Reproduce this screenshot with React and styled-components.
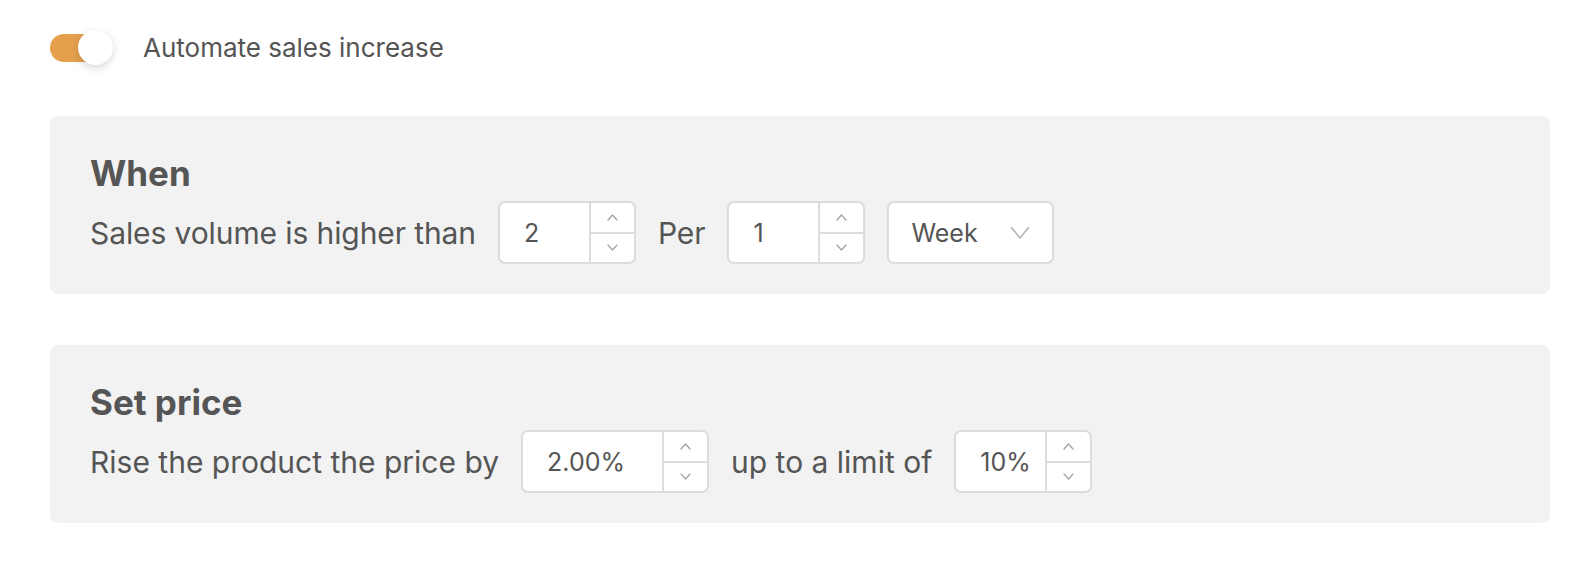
import React from 'react';
import styled, { createGlobalStyle } from 'styled-components';

const GlobalStyle = createGlobalStyle`
  body {
    margin: 0;
    background: #ffffff;
    font-family: 'Inter', 'Noto Sans', sans-serif;
    color: #555555;
  }
`;

const Page = styled.div`
  padding: 30px 38px 40px 50px;
`;

const ToggleRow = styled.div`
  display: flex;
  align-items: center;
  gap: 32px;
  height: 35px;
`;

const Switch = styled.div`
  position: relative;
  width: 61px;
  height: 35px;
  flex-shrink: 0;
`;

const Track = styled.div`
  position: absolute;
  left: 0;
  top: 4px;
  width: 56px;
  height: 28px;
  border-radius: 14px;
  background: ${p => (p.$on ? '#e5a04e' : '#cccccc')};
`;

const Knob = styled.div`
  position: absolute;
  top: 0;
  left: ${p => (p.$on ? '28px' : '0')};
  width: 35px;
  height: 35px;
  border-radius: 50%;
  background: #ffffff;
  box-shadow: 0 3px 8px rgba(0, 0, 0, 0.16);
`;

const ToggleLabel = styled.span`
  font-size: 26px;
  color: #555555;
`;

const Panel = styled.section`
  margin-top: 51px;
  background: #f2f2f2;
  border-radius: 8px;
  padding: 37px 40px 30px;
`;

const Heading = styled.h2`
  margin: 0 0 8px;
  font-size: 35px;
  line-height: 40px;
  font-weight: 700;
  color: #555555;
`;

const Row = styled.div`
  display: flex;
  align-items: center;
  gap: 22px;
  font-size: 30px;
`;

const Label = styled.span`
  letter-spacing: ${p => p.$tight ? '-0.1px' : '0'};
`;

const Field = styled.div`
  display: flex;
  width: ${p => p.$width}px;
  height: 63px;
  box-sizing: border-box;
  background: #ffffff;
  border: 2px solid #dcdcdc;
  border-radius: 7px;
  overflow: hidden;
`;

const Value = styled.div`
  flex: 1;
  display: flex;
  align-items: center;
  padding-left: 24px;
  font-size: 25px;
  color: #555555;
`;

const Spinner = styled.div`
  width: 43px;
  display: flex;
  flex-direction: column;
  border-left: 2px solid #dcdcdc;
`;

const SpinButton = styled.div`
  flex: 1;
  display: flex;
  align-items: center;
  justify-content: center;
  color: #a0a0a0;
  & + & {
    border-top: 2px solid #dcdcdc;
  }
`;

const SelectBox = styled.div`
  display: flex;
  align-items: center;
  justify-content: space-between;
  width: 167px;
  height: 63px;
  box-sizing: border-box;
  padding: 0 22px 0 22px;
  background: #ffffff;
  border: 2px solid #dcdcdc;
  border-radius: 7px;
  font-size: 25px;
  color: #555555;
`;

const Chevron = ({ up, w = 11, h = 7 }) => (
  <svg width={w} height={h} viewBox="0 0 11 7" fill="none">
    <path
      d={up ? 'M1 6 L5.5 1 L10 6' : 'M1 1 L5.5 6 L10 1'}
      stroke="currentColor"
      strokeWidth="1.2"
      strokeLinecap="round"
      strokeLinejoin="round"
    />
  </svg>
);

const NumberInput = ({ value, width }) => (
  <Field $width={width}>
    <Value>{value}</Value>
    <Spinner>
      <SpinButton><Chevron up /></SpinButton>
      <SpinButton><Chevron /></SpinButton>
    </Spinner>
  </Field>
);

const SelectArrow = styled.span`
  display: flex;
  color: #b5b5b5;
`;

const Select = ({ value }) => (
  <SelectBox>
    <span>{value}</span>
    <SelectArrow>
      <svg width="20" height="13" viewBox="0 0 20 13" fill="none">
        <path d="M1 1 L10 12 L19 1" stroke="currentColor" strokeWidth="1.5" strokeLinejoin="round" />
      </svg>
    </SelectArrow>
  </SelectBox>
);

export default function App() {
  return (
    <>
      <GlobalStyle />
      <Page>
        <ToggleRow>
          <Switch>
            <Track $on />
            <Knob $on />
          </Switch>
          <ToggleLabel>Automate sales increase</ToggleLabel>
        </ToggleRow>

        <Panel>
          <Heading>When</Heading>
          <Row>
            <Label $tight>Sales volume is higher than</Label>
            <NumberInput value="2" width={138} />
            <Label $tight>Per</Label>
            <NumberInput value="1" width={138} />
            <Select value="Week" />
          </Row>
        </Panel>

        <Panel>
          <Heading>Set price</Heading>
          <Row>
            <Label>Rise the product the price by</Label>
            <NumberInput value="2.00%" width={188} />
            <Label>up to a limit of</Label>
            <NumberInput value="10%" width={138} />
          </Row>
        </Panel>
      </Page>
    </>
  );
}
